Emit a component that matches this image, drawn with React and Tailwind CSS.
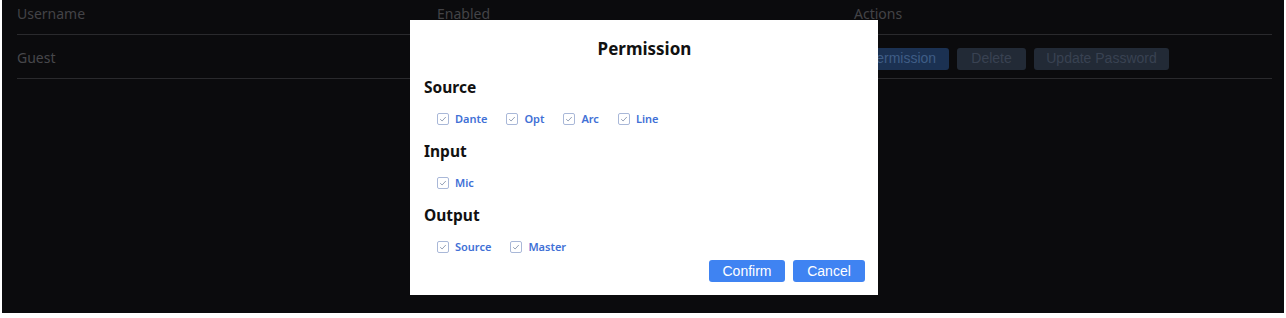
import React from 'react';

const sections = [
  { title: 'Source', items: ['Dante', 'Opt', 'Arc', 'Line'] },
  { title: 'Input', items: ['Mic'] },
  { title: 'Output', items: ['Source', 'Master'] },
];

const CheckBox = () => (
  <svg width="12" height="12" viewBox="0 0 12 12" className="shrink-0">
    <rect x="0.5" y="0.5" width="11" height="11" rx="1.5" fill="#fff" stroke="#a9b8d8" />
    <path d="M3.2 6.2 L5.1 8 L8.8 4" fill="none" stroke="#8a97b0" strokeWidth="0.9" />
  </svg>
);

const App = () => {
  return (
    <div className="bg-white w-full h-[318px]">
      {/* Dark page */}
      <div className="relative mx-[2px] h-[313px] bg-[#0b0b0d] font-['Noto_Sans',sans-serif] text-[14px]">
        <div className="pl-[15px] pr-[12px]">
          {/* Table header */}
          <div className="grid grid-cols-[420px_417px_1fr] h-[35px] pb-[7px] items-center border-b border-[#2a2a2d] text-[#434347]">
            <div>Username</div>
            <div>Enabled</div>
            <div>Actions</div>
          </div>
          {/* Row */}
          <div className="grid grid-cols-[420px_417px_1fr] h-[44px] pt-[2px] items-center border-b border-[#2a2a2d] text-[#47474b]">
            <div>Guest</div>
            <div></div>
            <div className="flex gap-2 pt-[2px] font-['Liberation_Sans',Arial,sans-serif]">
              <button className="w-[95px] h-[22px] rounded-[3px] bg-[#1b3152] text-[#3f5d86]">Permission</button>
              <button className="w-[69px] h-[22px] rounded-[3px] bg-[#222a36] text-[#394252]">Delete</button>
              <button className="w-[135px] h-[22px] rounded-[3px] bg-[#222a36] text-[#394252]">Update Password</button>
            </div>
          </div>
        </div>

        {/* Modal overlay */}
        <div className="absolute inset-0 pl-[2px] pt-[2px] flex items-center justify-center">
          <div className="w-[468px] h-[275px] bg-white pt-[17px] pb-[13px] pl-[14px] pr-[13px] flex flex-col">
            <div className="h-[24px] leading-[24px] text-center text-[17px] font-bold text-[#111]">Permission</div>
            <div className="mt-[14px] flex flex-col gap-2">
              {sections.map((s) => (
                <div key={s.title} className="flex flex-col gap-2">
                  <div className="h-[24px] leading-[24px] text-[15.5px] font-bold text-[#111]">{s.title}</div>
                  <div className="h-[24px] flex items-center pl-[13px] gap-[19px]">
                    {s.items.map((it) => (
                      <label key={it} className="flex items-center gap-[6px] text-[11px] font-semibold text-[#4170d6]">
                        <CheckBox />
                        <span>{it}</span>
                      </label>
                    ))}
                  </div>
                </div>
              ))}
            </div>
            <div className="mt-auto flex justify-end gap-2 font-['Liberation_Sans',Arial,sans-serif]">
              <button className="w-[76px] h-[22px] rounded-[3px] bg-[#3f83f2] text-white text-[14px]">Confirm</button>
              <button className="w-[72px] h-[22px] rounded-[3px] bg-[#3f83f2] text-white text-[14px]">Cancel</button>
            </div>
          </div>
        </div>
      </div>
    </div>
  );
};

export default App;
